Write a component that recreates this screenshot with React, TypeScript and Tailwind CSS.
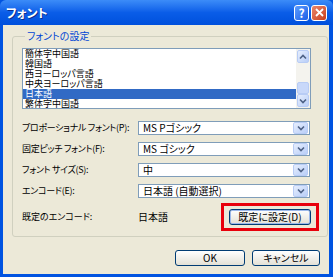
import React from 'react'

const items = ['簡体字中国語', '韓国語', '西ヨーロッパ言語', '中央ヨーロッパ言語', '日本語', '繁体字中国語']

const rows = [
  { label: 'プロポーショナル フォント(P):', value: 'MS Pゴシック' },
  { label: '固定ピッチ フォント(F):', value: 'MS ゴシック' },
  { label: 'フォント サイズ(S):', value: '中' },
  { label: 'エンコード(E):', value: '日本語 (自動選択)' },
]

function Chevron({ up = false }: { up?: boolean }) {
  return (
    <svg width="8" height="6" viewBox="0 0 8 6">
      <path d={up ? 'M1 4.5 L4 1.5 L7 4.5' : 'M1 1.5 L4 4.5 L7 1.5'} fill="none" stroke="#4D6185" strokeWidth="1.6" />
    </svg>
  )
}

function ArrowBox({ up = false, className = '' }: { up?: boolean; className?: string }) {
  return (
    <div className={`flex items-center justify-center rounded-[2px] border border-[#B8CCF5] bg-gradient-to-br from-[#E6EEFD] to-[#B9CEF8] ${className}`}>
      <Chevron up={up} />
    </div>
  )
}

function Combo({ value }: { value: string }) {
  return (
    <div className="flex h-[14px] w-[172px] shrink-0 items-center border border-[#7F9DB9] bg-white p-px">
      <span className="flex-1 whitespace-nowrap pl-[3px] text-[10px] leading-[12px] text-black">{value}</span>
      <ArrowBox className="h-[12px] w-[15px]" />
    </div>
  )
}

function XPButton({ children, w, focus = false }: { children: React.ReactNode; w: string; focus?: boolean }) {
  return (
    <button
      className={`flex h-[16px] items-center justify-center whitespace-nowrap rounded-[3px] border border-[#003C74] bg-gradient-to-b from-white to-[#E3E1D6] text-[10px] leading-[12px] text-black ${w} ${focus ? 'shadow-[inset_0_0_0_1px_#9DB9EB]' : ''}`}
    >
      {children}
    </button>
  )
}

export default function App() {
  return (
    <div className="flex h-[277px] w-[333px] flex-col overflow-hidden bg-[#0053E1] font-['Noto_Sans_CJK_JP',sans-serif] [font-feature-settings:'palt']">
      {/* title bar */}
      <div className="flex h-[25px] shrink-0 items-center rounded-t-[6px] bg-gradient-to-b from-[#3C8CF8] via-[#0A5DE8] to-[#0050DC] pl-[6px] pr-[6px]">
        <span className="flex-1 text-[12px] font-bold leading-[14px] text-white [text-shadow:1px_1px_0_#0A2F8F]">フォント</span>
        <div className="flex gap-[2px]">
          <div className="flex h-[16px] w-[15px] items-center justify-center rounded-[3px] border border-white bg-gradient-to-br from-[#5C9CFF] to-[#1E5FE6] text-[12px] font-bold leading-none text-white">
            ?
          </div>
          <div className="flex h-[16px] w-[16px] items-center justify-center rounded-[3px] border border-white bg-gradient-to-br from-[#E9866B] to-[#C93B16]">
            <svg width="9" height="9" viewBox="0 0 9 9">
              <path d="M1 1 L8 8 M8 1 L1 8" stroke="white" strokeWidth="1.8" />
            </svg>
          </div>
        </div>
      </div>

      {/* body */}
      <div className="mb-[3px] ml-[3px] mr-[4px] flex flex-1 flex-col bg-[#ECE9D8] text-black">
        <fieldset className="ml-[9px] mt-[5px] w-[308px] rounded-[3px] border border-[#D0D0BF] pb-[5px] pl-[9px] pr-[8px] pt-[6px]">
          <legend className="ml-[3px] px-[2px] text-[10px] leading-[12px] text-[#0046D5]">フォントの設定</legend>

          {/* list */}
          <div className="flex h-[61px] w-[289px] border border-[#7F9DB9] bg-white">
            <div className="flex-1 overflow-hidden">
              {items.map(it => (
                <div
                  key={it}
                  className={`h-[10px] whitespace-nowrap pl-[2px] text-[9px] leading-[10px] ${it === '日本語' ? 'bg-[#316AC5] text-white' : 'text-black'}`}
                >
                  {it}
                </div>
              ))}
            </div>
            <div className="flex w-[14px] flex-col bg-[#F4F3EE] p-px">
              <ArrowBox up className="h-[13px]" />
              <div className="flex flex-1 flex-col justify-end">
                <div className="h-[12px] rounded-[2px] border border-[#B8CCF5] bg-[#C8D8FA]" />
              </div>
              <ArrowBox className="h-[13px]" />
            </div>
          </div>

          {/* combos */}
          <div className="mt-[12px] flex flex-col gap-[7px]">
            {rows.map(r => (
              <div key={r.label} className="flex items-center">
                <span className="w-[116px] shrink-0 whitespace-nowrap text-[9px] leading-[12px] tracking-[-0.3px]">{r.label}</span>
                <Combo value={r.value} />
              </div>
            ))}
          </div>

          {/* default encoding */}
          <div className="mt-[5px] flex h-[28px] items-center">
            <span className="w-[116px] shrink-0 whitespace-nowrap text-[9px] leading-[12px]">既定のエンコード:</span>
            <span className="w-[83px] shrink-0 text-[10px] leading-[12px]">日本語</span>
            <div className="flex h-[28px] w-[98px] shrink-0 items-center justify-center border-[3px] border-[#E8000B]">
              <XPButton w="w-[82px]" focus>既定に設定(D)</XPButton>
            </div>
          </div>
        </fieldset>

        <div className="mt-[13px] flex justify-end gap-[7px] pr-[9px]">
          <XPButton w="w-[70px]">OK</XPButton>
          <XPButton w="w-[68px]">キャンセル</XPButton>
        </div>
      </div>
    </div>
  )
}
